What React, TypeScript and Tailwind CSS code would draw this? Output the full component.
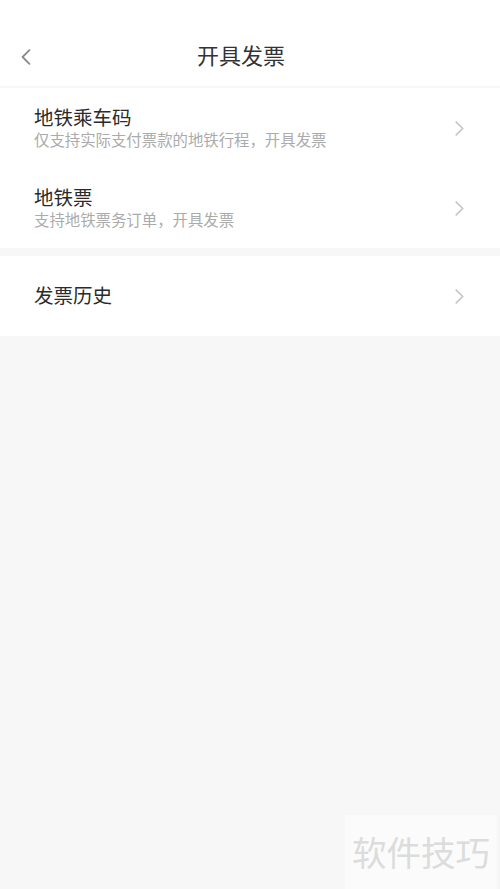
const font = { fontFamily: '"Noto Sans CJK SC", "Noto Sans", sans-serif' }

function Chevron({ className, back }: { className: string; back?: boolean }) {
  return (
    <svg viewBox="0 0 8 14" className={className} fill="none" stroke="currentColor" strokeWidth="1.6" strokeLinecap="round" strokeLinejoin="round">
      <path d={back ? "M7 1L1 7l6 6" : "M1 1l6 6-6 6"} />
    </svg>
  )
}

function Row({ title, sub }: { title: string; sub?: string }) {
  return (
    <div className="flex h-[80px] items-center bg-white pl-[34px] pr-[36px]">
      <div className="mb-[3px] flex flex-1 flex-col">
        <div className="text-[19.5px] leading-[24px] text-[#2b2b2b]">{title}</div>
        {sub && <div className="text-[15.4px] leading-[20px] text-[#ababab]">{sub}</div>}
      </div>
      <Chevron className="h-[15px] w-[9px] text-[#c6c6c6]" />
    </div>
  )
}

export default function App() {
  return (
    <div className="relative min-h-[889px] w-full overflow-hidden bg-[#f7f7f7]" style={font}>
      <header className="flex h-[86px] items-end bg-white pb-[14px]">
        <div className="flex h-[30px] w-full items-center px-[21px]">
          <Chevron back className="h-[16px] w-[10px] text-[#8a8a8a]" />
          <div className="mb-[5px] flex-1 pr-[28px] text-center text-[22px] text-[#333]">开具发票</div>
        </div>
      </header>
      <div className="h-[2px]" />
      <Row title="地铁乘车码" sub="仅支持实际支付票款的地铁行程，开具发票" />
      <Row title="地铁票" sub="支持地铁票务订单，开具发票" />
      <div className="h-[8px]" />
      <Row title="发票历史" />

      <div className="absolute bottom-0 right-[3px] flex h-[74px] w-[152px] items-center justify-center bg-[#fbfbfb] text-[34.5px] text-[#dcdcdc]">
        软件技巧
      </div>
    </div>
  )
}
